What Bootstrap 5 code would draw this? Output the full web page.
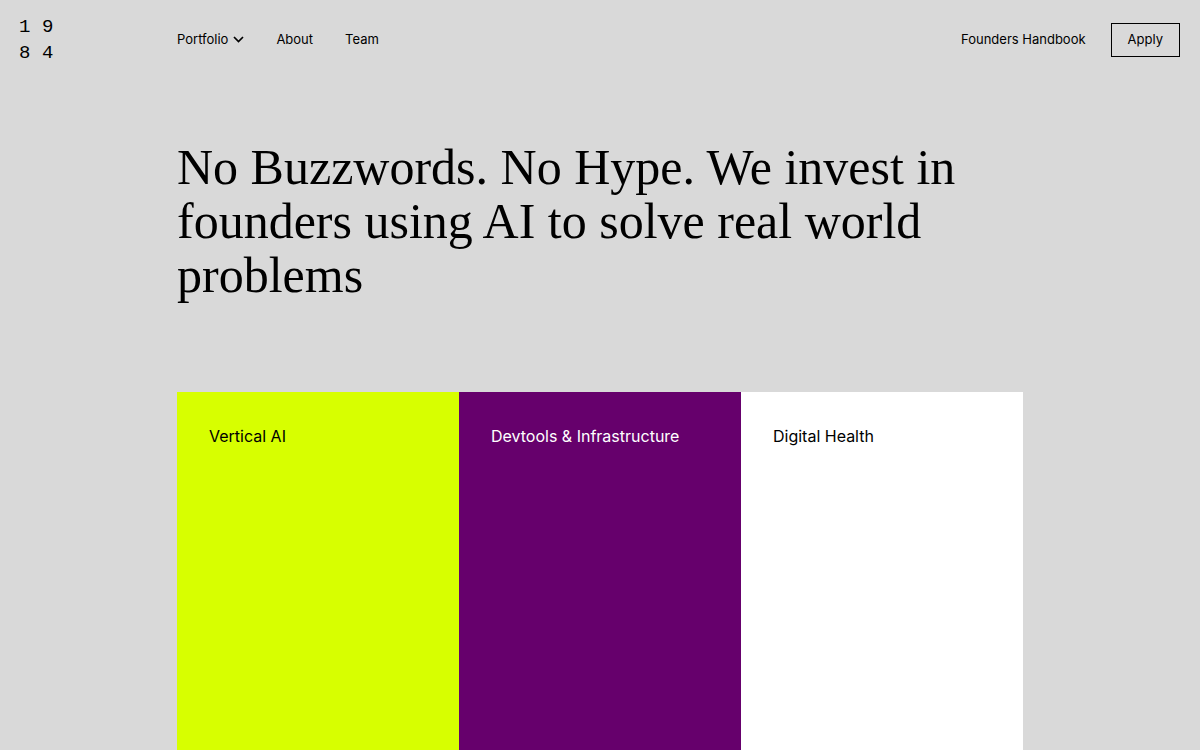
<!DOCTYPE html>
<html lang="en">
<head>
<meta charset="utf-8">
<meta name="viewport" content="width=device-width, initial-scale=1">
<title>1984</title>
<link href="https://cdn.jsdelivr.net/npm/bootstrap@5.3.0/dist/css/bootstrap.min.css" rel="stylesheet">
<style>
body { background: #d9d9d9; color: #000; font-family: Inter, "Liberation Sans", sans-serif; }
.site-header { min-height: 80px; padding: 0 20px 0 19px; font-size: 13px; line-height: 20px; }
.site-header a, .menu-toggle { color: #000; text-decoration: none; }
.brand { width: 158px; font: 19px/26px "Liberation Mono", monospace; }
.brand-grid { display: grid; grid-template-columns: 23px 11px; }
.menu { gap: 32px; }
.menu > *, .handbook { padding: 0 0 2px; }
.menu-toggle { gap: 5px; }
.actions { gap: 25px; }
.apply { border: 1px solid #000; border-radius: 0; padding: 5px 16px 7px; font-size: 13px; line-height: 20px; color: #000; }
.apply:hover { background: #000; color: #fff; }
.intro { margin: 0 177px; padding-top: 60px; }
.headline { font: 400 50px/54px "Liberation Serif", serif; margin: 0 0 90px; }
.sector { min-height: 280px; padding: 32px; font-size: 16px; line-height: 24px; }
.sector h2 { font: inherit; margin: 0; }
.lime { background: #d7ff00; }
.plum { background: #66006c; color: #fff; }
@media (max-width: 767px) {
  .site-header { flex-wrap: wrap; gap: 16px; padding: 16px 20px; }
  .brand { width: auto; }
  .intro { margin: 0 20px; padding-top: 32px; }
  .headline { font-size: 36px; line-height: 40px; margin-bottom: 48px; }
}
</style>
</head>
<body class="d-flex flex-column min-vh-100">
<header class="site-header d-flex align-items-center">
  <a href="#" class="brand flex-shrink-0" aria-label="1984"><span class="brand-grid"><span>1</span><span>9</span><span>8</span><span>4</span></span></a>
  <nav class="menu d-flex align-items-center">
    <button type="button" class="menu-toggle border-0 bg-transparent d-flex align-items-center">Portfolio
      <svg width="11" height="12" viewBox="0 0 11 12" fill="none" stroke="#000" stroke-width="1.7" aria-hidden="true"><path d="M1 4 5.500 8.500 10 4"/></svg>
    </button>
    <a href="#">About</a>
    <a href="#">Team</a>
  </nav>
  <div class="actions d-flex align-items-center ms-auto">
    <a href="#" class="handbook">Founders Handbook</a>
    <button type="button" class="apply btn">Apply</button>
  </div>
</header>
<main class="intro flex-grow-1 d-flex flex-column">
  <h1 class="headline">No Buzzwords. No Hype. We invest in founders using AI to solve real world problems</h1>
  <div class="row g-0 flex-grow-1">
    <section class="col-12 col-md-4 sector lime"><h2>Vertical AI</h2></section>
    <section class="col-12 col-md-4 sector plum"><h2>Devtools &amp; Infrastructure</h2></section>
    <section class="col-12 col-md-4 sector bg-white"><h2>Digital Health</h2></section>
  </div>
</main>
<script src="https://cdn.jsdelivr.net/npm/bootstrap@5.3.0/dist/js/bootstrap.bundle.min.js"></script>
</body>
</html>
